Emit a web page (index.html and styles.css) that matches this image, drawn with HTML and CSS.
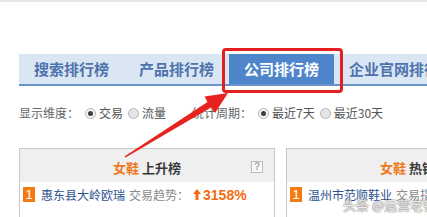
FILE: index.html
```html
<!DOCTYPE html>
<html lang="zh">
<head>
<meta charset="utf-8">
<title>排行榜</title>
<link rel="stylesheet" href="styles.css">
</head>
<body>
<div class="topbar"></div>
<div class="tabs">
  <div class="tab">搜索排行榜</div>
  <div class="tab">产品排行榜</div>
  <div class="tab active">公司排行榜</div>
  <div class="tab">企业官网排行榜</div>
</div>
<div class="filters">
  <span class="label">显示维度：</span>
  <span class="radio checked"></span><span class="opt">交易</span>
  <span class="radio"></span><span class="opt last">流量</span>
  <span class="label">统计周期：</span>
  <span class="radio checked"></span><span class="opt">最近7天</span>
  <span class="radio"></span><span class="opt">最近30天</span>
</div>
<div class="panels">
  <div class="panel">
    <div class="panel-head"><span class="cat">女鞋</span> <span class="kind">上升榜</span><span class="help">?</span></div>
    <div class="row">
      <span class="rank">1</span><span class="name">惠东县大岭欧瑞</span><span class="meta">交易趋势：</span>
      <svg class="up" width="8" height="11" viewBox="0 0 8 11"><path d="M4 0 L8 5 L5.5 5 L5.5 11 L2.5 11 L2.5 5 L0 5 Z" fill="#f26b12"/></svg>
      <span class="pct">3158%</span>
    </div>
  </div>
  <div class="panel">
    <div class="panel-head"><span class="cat">女鞋</span> <span class="kind">热销榜</span></div>
    <div class="row">
      <span class="rank">1</span><span class="name">温州市范顺鞋业</span><span class="meta">交易指数：</span>
    </div>
  </div>
</div>
<div class="callout"></div>
<svg class="arrow" width="427" height="217" viewBox="0 0 427 217">
  <polygon points="228,93 204.5,96.5 207.5,102 124.5,156.5 125.5,157.5 211,107.5 215,113" fill="#e8231f"/>
</svg>
<div class="watermark">头条 @运营老锡</div>
</body>
</html>
```
FILE: styles.css
```css
html, body {
  margin: 0;
  padding: 0;
  background: #fff;
}
body {
  width: 427px;
  height: 217px;
  overflow: hidden;
  position: relative;
  font-family: "Noto Sans CJK SC", "Liberation Sans", sans-serif;
}
.topbar {
  height: 2px;
  background: #e6e6e6;
}
.tabs {
  display: flex;
  margin: 52px 0 0 19px;
  height: 30px;
  background: #dbe6f4;
  border-bottom: 2px solid #6a93cb;
  overflow: hidden;
}
.tab {
  flex: none;
  padding: 0 15px;
  font-size: 15px;
  font-weight: bold;
  line-height: 30px;
  color: #4e73ad;
  white-space: nowrap;
}
.tab.active {
  background: #4e85cb;
  color: #fff;
}
.filters {
  display: flex;
  align-items: center;
  margin: 19px 0 0 19px;
  font-size: 12px;
  line-height: 16px;
  color: #666;
  white-space: nowrap;
}
.label {
  margin-right: 6px;
}
.radio {
  flex: none;
  width: 11px;
  height: 11px;
  box-sizing: border-box;
  border: 1px solid #b4b4b4;
  border-radius: 50%;
  background: #e4e4e4;
  margin-right: 3px;
  display: flex;
  align-items: center;
  justify-content: center;
}
.radio.checked {
  background: #f4f4f4;
}
.radio.checked::after {
  content: "";
  width: 5px;
  height: 5px;
  border-radius: 50%;
  background: #3d3d3d;
}
.opt {
  margin-right: 5px;
  color: #555;
}
.opt.last {
  margin-right: 26px;
}
.panels {
  display: flex;
  gap: 11px;
  margin: 27px 0 0 19px;
}
.panel {
  flex: none;
  width: 256px;
  height: 120px;
  box-sizing: border-box;
  border: 1px solid #c8c8c8;
}
.panel-head {
  position: relative;
  height: 33px;
  box-sizing: border-box;
  padding-top: 11px;
  background: #efefef;
  text-align: center;
  font-size: 13px;
  line-height: 16px;
  font-weight: bold;
  white-space: nowrap;
}
.cat {
  color: #f07a1e;
}
.kind {
  color: #3a3a3a;
}
.help {
  position: absolute;
  right: 11px;
  top: 12px;
  width: 12px;
  height: 12px;
  box-sizing: border-box;
  border: 1px solid #bcbcbc;
  background: #f9f9f9;
  color: #a8a8a8;
  font-family: "Liberation Sans", sans-serif;
  font-size: 10px;
  line-height: 10px;
  font-weight: bold;
  text-align: center;
}
.row {
  display: flex;
  align-items: center;
  padding: 5px 0 0 3px;
  height: 15px;
  font-size: 12px;
  white-space: nowrap;
}
.rank {
  flex: none;
  width: 12px;
  height: 15px;
  background: #f47a12;
  color: #fff;
  font-family: "Liberation Sans", sans-serif;
  font-size: 13px;
  line-height: 15px;
  text-align: center;
  margin-right: 6px;
}
.name {
  color: #2b5190;
  margin-right: 4px;
}
.meta {
  color: #8a8a8a;
  margin-right: 4px;
}
.up {
  flex: none;
  margin-right: 2px;
}
.pct {
  color: #f26b12;
  font-family: "Liberation Sans", sans-serif;
  font-weight: bold;
  font-size: 14px;
}
.callout {
  position: absolute;
  left: 222px;
  top: 48px;
  width: 121px;
  height: 45px;
  box-sizing: border-box;
  border: 3px solid #e3201f;
  border-radius: 4px;
}
.arrow {
  position: absolute;
  left: 0;
  top: 0;
  pointer-events: none;
}
.watermark {
  position: absolute;
  left: 343px;
  top: 197px;
  font-size: 13px;
  line-height: 16px;
  color: rgba(255, 255, 255, 0.85);
  text-shadow: 0 0 1px #666, 0 0 2px #888;
  white-space: nowrap;
}
```
